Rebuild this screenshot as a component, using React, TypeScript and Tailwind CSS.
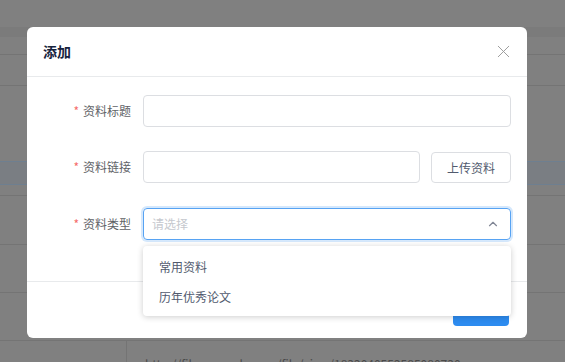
import { ChevronUp, X } from "lucide-react";

const font = { fontFamily: '"Noto Sans CJK SC", "Noto Sans", sans-serif' };

function Row({ label, children, className = "" }: { label: string; children: React.ReactNode; className?: string }) {
  return (
    <div className={"flex items-center h-8 " + className}>
      <div className="w-[100px] pr-3 flex justify-end items-center text-[12px] text-[#606266]">
        <span className="text-[#f56c6c] mr-1">*</span>
        {label}
      </div>
      <div className="flex-1 flex gap-[11px] h-8">{children}</div>
    </div>
  );
}

function Background() {
  return (
    <div className="w-full h-[362px] bg-[#808080] flex flex-col overflow-hidden">
      <div className="h-[27px] shrink-0" />
      <div className="h-[10px] shrink-0 bg-[#7b7b7b]" />
      <div className="h-[18px] shrink-0 border-b border-[#747474]" />
      <div className="h-[31px] shrink-0 border-b border-[#747474]" />
      <div className="h-[75px] shrink-0" />
      <div className="h-[24px] shrink-0 bg-[#7a7e83] border-y border-[#6e7f90]" />
      <div className="h-[11px] shrink-0 border-b border-[#747474]" />
      <div className="h-[49px] shrink-0 border-b border-[#747474]" />
      <div className="h-[48px] shrink-0 border-b border-[#747474]" />
      <div className="h-[48px] shrink-0 border-b border-[#747474]" />
      <div className="flex flex-1">
        <div className="w-[127px] border-r border-[#747474]" />
        <div className="pl-[18px] pt-[15px] text-[12px] leading-[16px] text-[#4a4a4a]" style={font}>
          http://file.example.com/file/view/1832040552585080730
        </div>
      </div>
    </div>
  );
}

export default function App() {
  return (
    <div className="relative w-[565px] h-[362px] overflow-hidden" style={font}>
      <Background />
      <div className="absolute left-[27px] top-[27px] w-[500px] h-[311px] bg-white rounded-[6px] flex flex-col">
        <div className="h-[50px] flex items-center justify-between px-4 border-b border-[#e8eaec]">
          <span className="text-[14px] font-bold text-[#17233d]">添加</span>
          <X size={21} strokeWidth={1.1} className="text-[#9a9a9a] -mr-[3px]" />
        </div>
        <div className="flex flex-col gap-6 px-4 pt-[18px] pb-[41px]">
          <Row label="资料标题">
            <div className="flex-1 border border-[#dcdee2] rounded-[4px]" />
          </Row>
          <Row label="资料链接">
            <div className="flex-1 border border-[#dcdee2] rounded-[4px]" />
            <div className="w-[80px] border border-[#dcdee2] rounded-[4px] flex items-center justify-center text-[12px] text-[#515a6e] mt-px">
              上传资料
            </div>
          </Row>
          <Row label="资料类型" className="mt-px">
            <div className="relative flex-1 border border-[#57a3f3] rounded-[4px] shadow-[0_0_0_2px_rgba(45,140,240,0.2)] flex items-center justify-between pl-2 pr-[10px]">
              <span className="text-[12px] text-[#c5c8ce]">请选择</span>
              <ChevronUp size={14} strokeWidth={2} className="text-[#808695]" />
              <div className="absolute left-[-1px] right-[-1px] top-[37px] bg-white rounded-[4px] shadow-[0_1px_6px_rgba(0,0,0,0.2)] pt-[6px] pb-[4px] z-10">
                <div className="h-[30px] flex items-center pl-4 text-[12px] text-[#515a6e]">常用资料</div>
                <div className="h-[30px] flex items-center pl-4 text-[12px] text-[#515a6e]">历年优秀论文</div>
              </div>
            </div>
          </Row>
        </div>
        <div className="flex-1 border-t border-[#e8eaec] flex justify-end items-start pt-[12px] pr-[18px]">
          <div className="w-[56px] h-8 rounded-[4px] bg-[#2d8cf0]" />
        </div>
      </div>
    </div>
  );
}
